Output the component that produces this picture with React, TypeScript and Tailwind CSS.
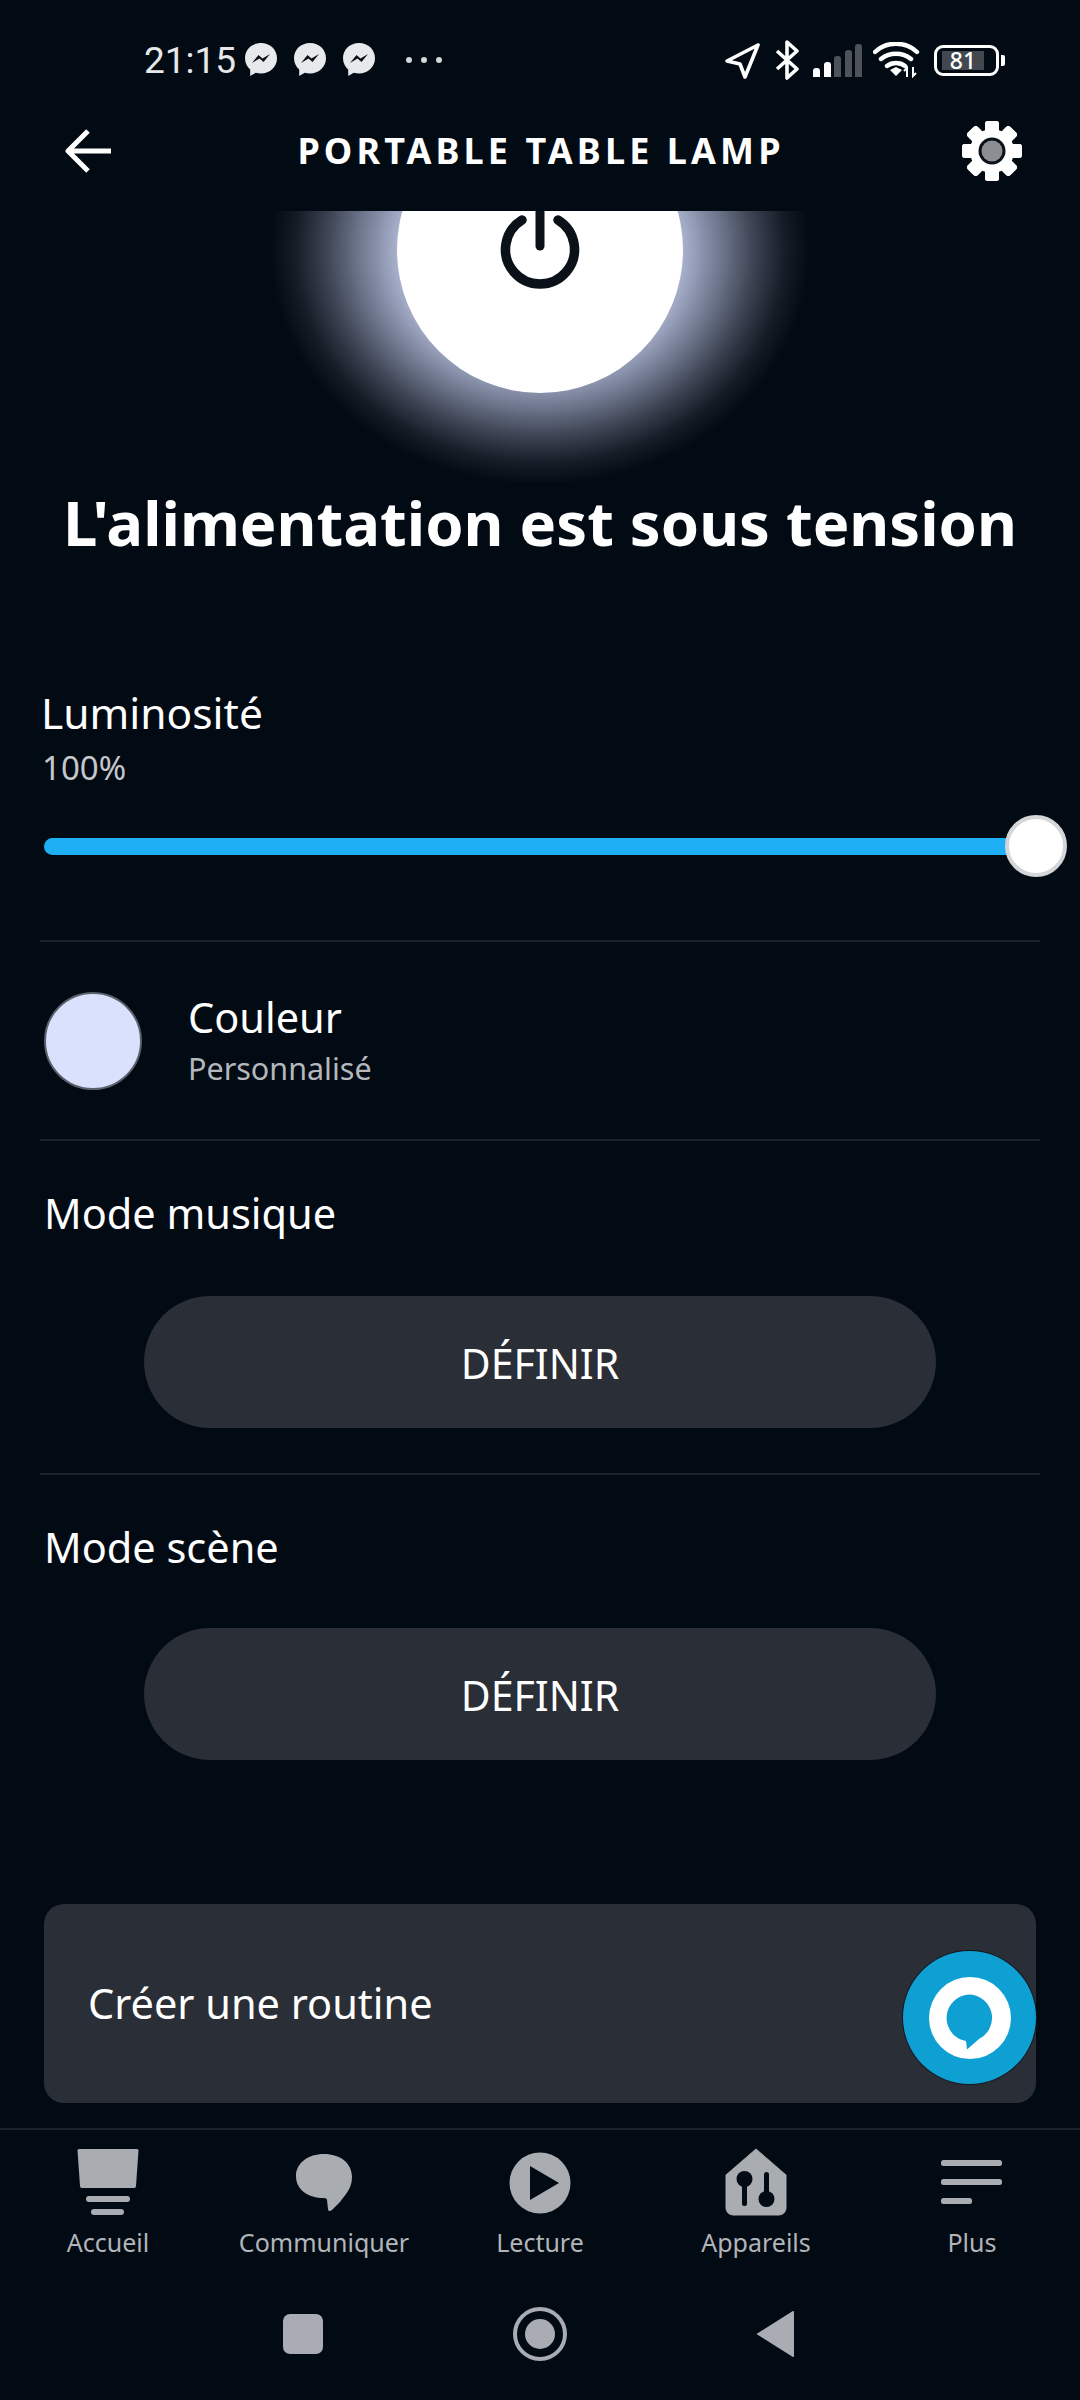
import React from 'react'

const font = { fontFamily: '"Noto Sans", sans-serif' }

const MessengerIcon = () => (
  <svg width="34" height="36" viewBox="0 0 34 36">
    <path d="M17 1C8 1 1 7.6 1 16.2c0 4.6 2 8.5 5.2 11.2V34l5.600-3.200c1.600.5 3.400.7 5.200.7 9 0 16-6.700 16-15.300S26 1 17 1z" fill="#e8e9ea" />
    <path d="M8 21l6.500-8 4 3.600L26 12l-6.500 8-4-3.600z" fill="#0a1018" />
  </svg>
)

const StatusIcons = () => (
  <div className="flex items-center">
    <svg width="37" height="37" viewBox="0 0 37 37" fill="none" className="mr-[13px]">
      <path d="M34 3L3 19l13 3 5 13z" stroke="#fff" strokeWidth="3.6" strokeLinejoin="round" />
    </svg>
    <svg width="26" height="40" viewBox="0 0 26 40" fill="none" className="mr-[13px]">
      <path d="M3 11l20 18-10 9V2l10 9L3 29" stroke="#fff" strokeWidth="3.6" strokeLinejoin="round" />
    </svg>
    <div className="flex items-end gap-[3.5px] h-[33px] mr-[11px]">
      <div className="w-[7px] h-[9px] rounded-t-[3px] bg-white" />
      <div className="w-[7px] h-[15px] rounded-t-[3px] bg-white" />
      <div className="w-[7px] h-[21px] rounded-t-[3px] bg-[#4d5359]" />
      <div className="w-[7px] h-[27px] rounded-t-[3px] bg-[#4d5359]" />
      <div className="w-[7px] h-[33px] rounded-t-[3px] bg-[#4d5359]" />
    </div>
    <svg width="48" height="36" viewBox="0 0 48 36" fill="none" className="mr-[13px]">
      <path d="M2 10C13-1 33-1 44 10M8 17c8-7 22-7 30 0M14 24c5-4 13-4 18 0" stroke="#fff" strokeWidth="4.4" strokeLinecap="round" />
      <path d="M17 28l6-3 6 3-6 6z" fill="#fff" />
      <path d="M34 35v-9l-3 3M40 25v9l3-3" stroke="#fff" strokeWidth="2" />
    </svg>
    <div className="flex items-center">
      <div className="w-[65px] h-[31px] rounded-[9px] border-[3px] border-white flex items-center pl-[5px]">
        <div className="w-[42px] h-[19px] bg-[#43484e] flex items-center justify-center text-white text-[23px] leading-none font-medium" style={font}>81</div>
      </div>
      <div className="w-[4px] h-[11px] ml-[2px] rounded-r-[2px] bg-white" />
    </div>
  </div>
)

const GearIcon = () => (
  <svg width="62" height="62" viewBox="0 0 62 62">
    {[0, 45, 90, 135, 180, 225, 270, 315].map((deg) => (
      <rect key={deg} x="24" y="1" width="14" height="60" rx="3" fill="#fff" transform={`rotate(${deg} 31 31)`} />
    ))}
    <circle cx="31" cy="31" r="22" fill="#fff" />
    <circle cx="31" cy="31" r="13.5" fill="#0a1018" />
    <circle cx="31" cy="31" r="10.5" fill="#8b8e92" />
  </svg>
)

// arc centre sits in the middle of the box so it lines up with the white disc
const PowerIcon = () => (
  <svg width="80" height="110" viewBox="0 0 80 110" fill="none">
    <path d="M22 25a34.500 34.500 0 1 0 36 0" stroke="#0a1119" strokeWidth="9.5" strokeLinecap="round" />
    <path d="M40 0v51" stroke="#0a1119" strokeWidth="9" strokeLinecap="round" />
  </svg>
)

const SectionTitle = ({ children }: { children: React.ReactNode }) => (
  <div className="text-white text-[41.500px] leading-[50px]">{children}</div>
)

const DefineButton = () => (
  <div className="mx-[104px] h-[132px] pt-[3px] rounded-full bg-[#2a2e36] flex items-center justify-center text-white text-[41px]">
    DÉFINIR
  </div>
)

const navLabels = ['Accueil', 'Communiquer', 'Lecture', 'Appareils', 'Plus']

const NavIcon = ({ name }: { name: string }) => {
  const c = '#a9acb1'
  if (name === 'Accueil') {
    return (
      <svg width="62" height="68" viewBox="0 0 62 68">
        <path d="M2 1h58a1.500 1.500 0 0 1 1.500 1.600L59 38a2 2 0 0 1-2 2H5a2 2 0 0 1-2-2L.5 2.600A1.500 1.500 0 0 1 2 1z" fill={c} />
        <rect x="9" y="48" width="44" height="6" rx="3" fill={c} />
        <rect x="14" y="61" width="33" height="6" rx="3" fill={c} />
      </svg>
    )
  }
  if (name === 'Communiquer') {
    return (
      <svg width="62" height="68" viewBox="0 0 62 68">
        <path d="M31 6c16 0 28 9 28 23 0 11-6 17-12 25l-8 8c-2 2-4 1-4-1l-1-9c0-1-1-2-3-2C15 50 3 42 3 28 3 15 15 6 31 6z" fill={c} />
      </svg>
    )
  }
  if (name === 'Lecture') {
    return (
      <svg width="62" height="68" viewBox="0 0 62 68">
        <circle cx="31" cy="35" r="30.500" fill={c} />
        <path d="M21 18l29 17-29 17z" fill="#020a13" strokeLinejoin="round" />
      </svg>
    )
  }
  if (name === 'Appareils') {
    return (
      <svg width="62" height="68" viewBox="0 0 62 68">
        <path d="M31 1L61 27v33a7 7 0 0 1-7 7H8a7 7 0 0 1-7-7V27z" fill={c} stroke={c} strokeLinejoin="round" />
        <circle cx="19.500" cy="31" r="8" fill="#020a13" />
        <rect x="17" y="32" width="5" height="26" rx="2.500" fill="#020a13" />
        <circle cx="41.500" cy="51" r="8" fill="#020a13" />
        <rect x="39" y="24" width="5" height="26" rx="2.500" fill="#020a13" />
      </svg>
    )
  }
  return (
    <svg width="62" height="68" viewBox="0 0 62 68">
      <rect x="0" y="12" width="61" height="6" rx="2.500" fill={c} />
      <rect x="0" y="31" width="61" height="6" rx="2.500" fill={c} />
      <rect x="0" y="50" width="31" height="6" rx="2.500" fill={c} />
    </svg>
  )
}

export default function App() {
  return (
    <div className="w-[1080px] h-[2400px] bg-[#020a13] flex flex-col overflow-hidden" style={font}>
      {/* status bar */}
      <div className="h-[90px] pt-[30px] pl-[144px] pr-[75px] flex items-center justify-between shrink-0">
        <div className="flex items-center">
          <span className="text-[#e6e8ea] text-[37px] leading-none mr-[8px]" style={{ fontFamily: 'Roboto, sans-serif' }}>21:15</span>
          <div className="flex items-center gap-[15px]">
            <MessengerIcon />
            <MessengerIcon />
            <MessengerIcon />
          </div>
          <div className="flex gap-[9px] ml-[30px]">
            <div className="w-[6px] h-[6px] rounded-full bg-[#d5d7da]" />
            <div className="w-[6px] h-[6px] rounded-full bg-[#d5d7da]" />
            <div className="w-[6px] h-[6px] rounded-full bg-[#d5d7da]" />
          </div>
        </div>
        <StatusIcons />
      </div>

      {/* header */}
      <div className="h-[121px] pl-[65px] pr-[57px] flex items-center justify-between shrink-0">
        <svg width="46" height="44" viewBox="0 0 46 44" fill="none">
          <path d="M23 2L3 22l20 20M3 22h43" stroke="#fff" strokeWidth="5" strokeLinejoin="round" />
        </svg>
        <div className="ml-[10px] text-white text-[36px] font-bold tracking-[4.1px]">PORTABLE TABLE LAMP</div>
        <GearIcon />
      </div>

      {/* power glow, cut off under the header */}
      <div className="h-[271px] overflow-hidden flex justify-center shrink-0">
        <div className="w-[540px] h-[470px] shrink-0 -mt-[196px] flex items-center justify-center bg-[radial-gradient(ellipse_closest-side,#a8b0cd_53%,#6a7388_68%,#3a4150_80%,#161c26_91%,#020a13_100%)]">
          <div className="w-[286px] h-[286px] rounded-full bg-white flex items-center justify-center">
            <PowerIcon />
          </div>
        </div>
      </div>

      <div className="text-white text-[61.500px] leading-[80px] font-bold text-center">L'alimentation est sous tension</div>

      <div className="px-[40px] flex flex-col">
        {/* brightness */}
        <div className="mt-[126px] px-[2px]">
          <div className="-ml-[1px] text-white text-[42.500px] leading-[50px]">Luminosité</div>
          <div className="mt-[9px] text-[#c4c7cb] text-[33px] leading-[42px]">100%</div>
          <div className="mt-[26px] h-[62px] -mr-[29px] pl-[2px] flex items-center">
            <div className="flex-1 h-[17px] rounded-l-full bg-[#1eaff5]" />
            <div className="w-[62px] h-[62px] -ml-[5px] rounded-full bg-white border-[4px] border-[#d4d6d8]" />
          </div>
        </div>
        <div className="mt-[63px] h-[2px] bg-[#1b222b]" />

        {/* colour */}
        <div className="h-[197px] flex items-center pl-[4px]">
          <div className="w-[98px] h-[98px] rounded-full bg-[#d9e1fd] border-2 border-[#5a606c]" />
          <div className="ml-[46px] -mt-[1px]">
            <SectionTitle>Couleur</SectionTitle>
            <div className="mt-[5px] text-[#b4b8bd] text-[30.500px] leading-[42px]">Personnalisé</div>
          </div>
        </div>
        <div className="h-[2px] bg-[#1b222b]" />

        {/* music mode */}
        <div className="mt-[47px] px-[4px]"><SectionTitle>Mode musique</SectionTitle></div>
        <div className="mt-[58px]"><DefineButton /></div>
        <div className="mt-[45px] h-[2px] bg-[#1b222b]" />

        {/* scene mode */}
        <div className="mt-[47px] px-[4px]"><SectionTitle>Mode scène</SectionTitle></div>
        <div className="mt-[56px]"><DefineButton /></div>

        {/* routine card */}
        <div className="mt-[144px] mx-[4px] h-[199px] rounded-[20px] bg-[#2a2e36] relative flex items-center pl-[44px] text-white text-[41.500px]">
          Créer une routine
          <div className="absolute right-0 bottom-[19px] w-[133px] h-[133px] rounded-full bg-[#0fa0d3] flex items-center justify-center shadow-[0_0_0_1px_#14181e]">
            <svg width="84" height="84" viewBox="0 0 84 84">
              <path d="M42 1a41 41 0 1 1 0 82 41 41 0 0 1 0-82zm0 17.500a23.500 23.500 0 0 0-14 42.300c3 2.200 6 3.400 10 4.200l1 8.500 12-10.500a23.500 23.500 0 0 0-9-44.500z" fill="#fff" fillRule="evenodd" />
            </svg>
          </div>
        </div>
      </div>

      {/* bottom nav */}
      <div className="mt-[25px] h-[2px] bg-[#1b222b]" />
      <div className="grid grid-cols-5 pt-[18px]">
        {navLabels.map((label) => (
          <div key={label} className="flex flex-col items-center">
            <NavIcon name={label} />
            <div className="mt-[9px] text-[#b2b5b9] text-[25px] leading-[34px]">{label}</div>
          </div>
        ))}
      </div>

      {/* android nav */}
      <div className="mt-[48px] pl-[283px] flex items-center">
        <div className="w-[40px] h-[40px] rounded-[7px] bg-[#a9acb2]" />
        <div className="ml-[190px] w-[54px] h-[54px] rounded-full border-[4px] border-[#a9acb2] flex items-center justify-center">
          <div className="w-[30px] h-[30px] rounded-full bg-[#a9acb2]" />
        </div>
        <svg width="38" height="46" viewBox="0 0 38 46" className="ml-[190px]">
          <path d="M37 1v44a1 1 0 0 1-1.500.8L1 24a1 1 0 0 1 0-2L35.500.200A1 1 0 0 1 37 1z" fill="#a9acb2" />
        </svg>
      </div>
    </div>
  )
}
